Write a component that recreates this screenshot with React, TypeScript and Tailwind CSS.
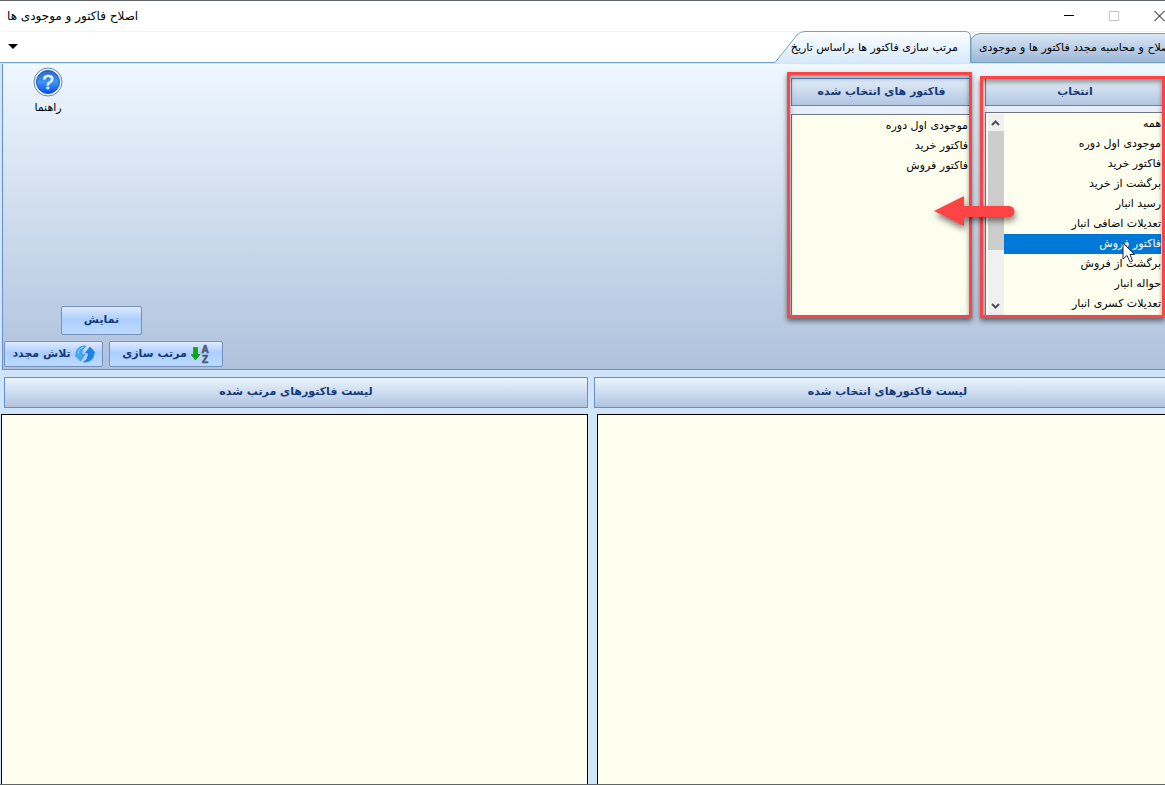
import React from 'react';

const SOURCE_ITEMS = [
  'همه',
  'موجودی اول دوره',
  'فاکتور خرید',
  'برگشت از خرید',
  'رسید انبار',
  'تعدیلات اضافی انبار',
  'فاکتور فروش',
  'برگشت از فروش',
  'حواله انبار',
  'تعدیلات کسری انبار',
];

const CHOSEN_ITEMS = ['موجودی اول دوره', 'فاکتور خرید', 'فاکتور فروش'];

const TitleBar: React.FC = () => (
  <header className="flex h-[31px] items-center justify-between overflow-hidden border-t border-[#5f6468] bg-white pl-[7px]">
    <h1 dir="rtl" className="text-[12px] leading-5 whitespace-nowrap">اصلاح فاکتور و موجودی ها</h1>
    <div className="-mr-[17px] flex h-full">
      <button aria-label="minimize" className="flex w-[45px] items-center justify-center">
        <svg width="11" height="11" stroke="#000" shapeRendering="crispEdges"><path d="M0 4.5h10" /></svg>
      </button>
      <button aria-label="maximize" disabled className="flex w-[45px] items-center justify-center">
        <svg width="11" height="11" fill="none" stroke="#c8c8c8" shapeRendering="crispEdges"><path d="M.5.5h9v9h-9z" /></svg>
      </button>
      <button aria-label="close" className="flex w-[45px] items-center justify-center">
        <svg width="11" height="11" stroke="#000"><path d="M.5 0l10 10M10.5 0l-10 10" /></svg>
      </button>
    </div>
  </header>
);

const TabStrip: React.FC = () => (
  <nav className="flex h-8 items-end justify-between border-t border-[#f4f4f4] bg-white">
    <div className="flex h-full flex-1 items-center border-b border-[#6fa3c0] pl-2">
      <button aria-label="menu">
        <svg width="10" height="6"><path d="M0 0h10L5 5z" fill="#000" /></svg>
      </button>
    </div>
    <button className="relative h-8 w-[196px] pr-[13px] pb-[2px] text-right">
      <svg className="absolute inset-0" width="196" height="32">
        <defs>
          <linearGradient id="tabOn" x1="0" y1="0" x2="0" y2="1">
            <stop offset="0" stopColor="#fdfeff" />
            <stop offset="1" stopColor="#d6e9fc" />
          </linearGradient>
        </defs>
        <path d="M0 31.500L22 4Q25 .5 30 .5H190Q195.500 .5 195.500 6V32H0z" fill="url(#tabOn)" />
        <path d="M0 31.500L22 4Q25 .5 30 .5H190Q195.500 .5 195.500 6V32" fill="none" stroke="#6fa3c0" />
      </svg>
      <span dir="rtl" className="relative text-[11px] leading-5 whitespace-nowrap">مرتب سازی فاکتور ها براساس تاریخ</span>
    </button>
    <button className="relative flex h-[30px] w-[194px] items-center overflow-hidden border-b border-[#6fa3c0] pl-2">
      <svg className="absolute inset-0" width="194" height="30">
        <defs>
          <linearGradient id="tabOff" x1="0" y1="0" x2="0" y2="1">
            <stop offset="0" stopColor="#dbe8f6" />
            <stop offset="1" stopColor="#9ab5d6" />
          </linearGradient>
        </defs>
        <path d="M0 30V6Q4 .5 9 .5H196V30z" fill="url(#tabOff)" stroke="#8a97a8" />
      </svg>
      <span dir="rtl" className="relative shrink-0 text-[11px] leading-5 whitespace-nowrap">اصلاح و محاسبه مجدد فاکتور ها و موجودی</span>
    </button>
  </nav>
);

const PanelHeading: React.FC<{ children: React.ReactNode }> = ({ children }) => (
  <h2 dir="rtl" className="flex h-7 items-center justify-center border border-[#5b86c5] bg-linear-to-b from-[#e1ecf8] to-[#b3c7e1] text-[11px] font-bold text-[#153a7a]">
    {children}
  </h2>
);

// red frame drawn over a list column
const Frame: React.FC = () => (
  <div className="pointer-events-none absolute inset-0 border-[3px] border-[#fd4343] shadow-[0_3px_5px_rgba(0,0,0,0.5),inset_0_3px_5px_rgba(0,0,0,0.4)]" />
);

const ListItem: React.FC<{ text: string; selected?: boolean }> = ({ text, selected }) => (
  <li
    role="option"
    aria-selected={!!selected}
    className={selected ? 'h-5 bg-[#0078d7] text-white' : 'h-5'}
  >
    {text}
  </li>
);

const ScrollBar: React.FC = () => (
  <div className="flex w-4 shrink-0 flex-col bg-[#f0f0f0]">
    <svg width="16" height="17" fill="none" stroke="#505050" strokeWidth="2"><path d="M4 11l3.500-3.500L11 11" /></svg>
    <div className="h-[119px] bg-[#cdcdcd]" />
    <svg className="mt-auto" width="16" height="17" fill="none" stroke="#505050" strokeWidth="2"><path d="M4 6l3.500 3.500L11 6" /></svg>
  </div>
);

const HelpIcon: React.FC = () => (
  <svg width="30" height="30" viewBox="0 0 30 30">
    <defs>
      <linearGradient id="help" x1="0" y1="0" x2="0" y2="1">
        <stop offset="0" stopColor="#2a68d4" />
        <stop offset=".5" stopColor="#3c96f5" />
        <stop offset="1" stopColor="#0a4be6" />
      </linearGradient>
    </defs>
    <circle cx="15" cy="15" r="14" fill="#edf2f9" stroke="#6c88a8" />
    <circle cx="15" cy="15" r="11.5" fill="url(#help)" stroke="#2257b8" />
    <text x="15" y="22" textAnchor="middle" fontSize="20" fontFamily="Liberation Sans, sans-serif" stroke="#eef4fb" strokeWidth=".6" fill="#eef4fb">?</text>
  </svg>
);

const RetryIcon: React.FC = () => (
  <svg width="20" height="18" viewBox="0 0 20 18">
    <path d="M11 1C5 .5 1 4 1 9.500L0 10.500 5.500 16 10 9.500 7 9.800C6.500 6 8 3 11 1z" fill="#45aaf0" stroke="#2384d2" strokeWidth=".6" />
    <path d="M8.500 17C15 17.500 19 13.500 18.800 8.500L20 7.500 15 2 10.500 7.800 13.200 8C13.500 12 12 15 8.500 17z" fill="#1b86ea" stroke="#1269c4" strokeWidth=".6" />
    <path d="M3 9C3 5.500 5 3 8 2.200" fill="none" stroke="#8fd4fb" />
  </svg>
);

const SortIcon: React.FC = () => (
  <svg width="19" height="22" viewBox="0 0 19 22">
    <path d="M2.500 4.500h4v7H9L4.500 17 0 11.500h2.500z" fill="#12a512" stroke="#0a8a0a" strokeWidth=".6" />
    <g fontSize="10" fontWeight="700" fontFamily="Liberation Sans, sans-serif" textAnchor="middle" fill="#4a5c74" stroke="#4a5c74" strokeWidth=".6">
      <text x="14" y="10">A</text>
      <text x="14" y="20">Z</text>
    </g>
  </svg>
);

const ActionButton: React.FC<{ className: string; children: React.ReactNode }> = ({ className, children }) => (
  <button
    dir="rtl"
    className={`flex items-center justify-center gap-1 rounded-xs border border-[#7590bd] bg-linear-to-b from-[#dfeaff] from-0% via-[#adcfff] via-45% to-[#bcdaff] text-[11px] font-bold whitespace-nowrap text-[#153a7a] ${className}`}
  >
    {children}
  </button>
);

const Ribbon: React.FC = () => (
  <section className="mt-px ml-[2px] flex justify-between border-b border-l border-[#6490cf] bg-linear-to-b from-[#eff7ff] to-[#afc2dc]">
    <div className="flex flex-col justify-between pt-[3px] pb-[2px] pl-px">
      <button className="ml-[26px] flex w-9 flex-col items-center gap-px text-[11px] leading-5">
        <HelpIcon />
        <span dir="rtl">راهنما</span>
      </button>
      <div>
        <ActionButton className="ml-[57px] h-[29px] w-[81px]">نمایش</ActionButton>
        <div className="mt-[6px] flex gap-[6px]">
          <ActionButton className="h-[26px] w-[99px]">
            <RetryIcon />
            تلاش مجدد
          </ActionButton>
          <ActionButton className="h-[26px] w-[114px]">
            <SortIcon />
            مرتب سازی
          </ActionButton>
        </div>
      </div>
    </div>

    <div className="relative mt-2 mb-[51px] flex items-end gap-2">
      <div className="relative w-[185px] pt-[6px] pb-[3px] pl-1">
        <PanelHeading>فاکتور های انتخاب شده</PanelHeading>
        <ul role="listbox" dir="rtl" className="mt-2 h-[201px] border-t border-l border-[#70757f] bg-[#fffff0] pt-px pr-1 text-[11px] leading-5">
          {CHOSEN_ITEMS.map((text) => (
            <ListItem key={text} text={text} />
          ))}
        </ul>
        <Frame />
      </div>
      <div className="relative w-[185px] pt-[2px] pb-[3px] pl-[5px]">
        <PanelHeading>انتخاب</PanelHeading>
        <div className="mt-[6px] flex h-[203px] border-t border-l border-[#70757f] bg-[#fffff0] pt-px pl-[2px]">
          <ScrollBar />
          <ul role="listbox" dir="rtl" className="flex-1 pr-1 text-[11px] leading-5">
            {SOURCE_ITEMS.map((text) => (
              <ListItem key={text} text={text} selected={text === 'فاکتور فروش'} />
            ))}
          </ul>
        </div>
        <Frame />
      </div>

      <svg className="absolute top-[122px] right-[148px] drop-shadow-[1px_4px_3px_rgba(0,0,0,0.5)]" width="84" height="34">
        <path d="M1 17L31 2V12H76A5.500 5.500 0 0 1 76 23H31V32z" fill="#fd4343" />
      </svg>
      <svg className="absolute top-[170px] right-[29px]" width="14" height="21">
        <path d="M1 1V17L5 13.500 8 20 10.500 19 8 12.500H12.500z" fill="#fff" stroke="#1b2a44" />
      </svg>
    </div>
  </section>
);

const ResultHeading: React.FC<{ children: React.ReactNode }> = ({ children }) => (
  <h2 dir="rtl" className="flex h-[31px] items-center justify-center border border-[#6490cf] bg-linear-to-b from-[#ebf5fe] to-[#b1c4df] text-[11px] font-bold text-[#153a7a]">
    {children}
  </h2>
);

export default function App() {
  return (
    <div className="flex min-h-screen flex-col overflow-hidden border-b border-[#5f6468] bg-[#d1e5fa] font-['DejaVu_Sans',sans-serif] text-black">
      <TitleBar />
      <TabStrip />
      <Ribbon />
      <main className="mt-[7px] flex flex-1 gap-[6px]">
        <section className="flex w-[588px] flex-col">
          <div className="pl-1">
            <ResultHeading>لیست فاکتورهای مرتب شده</ResultHeading>
          </div>
          <div className="mt-[6px] ml-px flex-1 border border-b-0 border-black bg-[#fffff0]" />
        </section>
        <section className="flex flex-1 flex-col">
          <div className="-mr-4">
            <ResultHeading>لیست فاکتورهای انتخاب شده</ResultHeading>
          </div>
          <div className="mt-[6px] ml-[3px] flex-1 border-t border-l border-black bg-[#fffff0]" />
        </section>
      </main>
    </div>
  );
}
